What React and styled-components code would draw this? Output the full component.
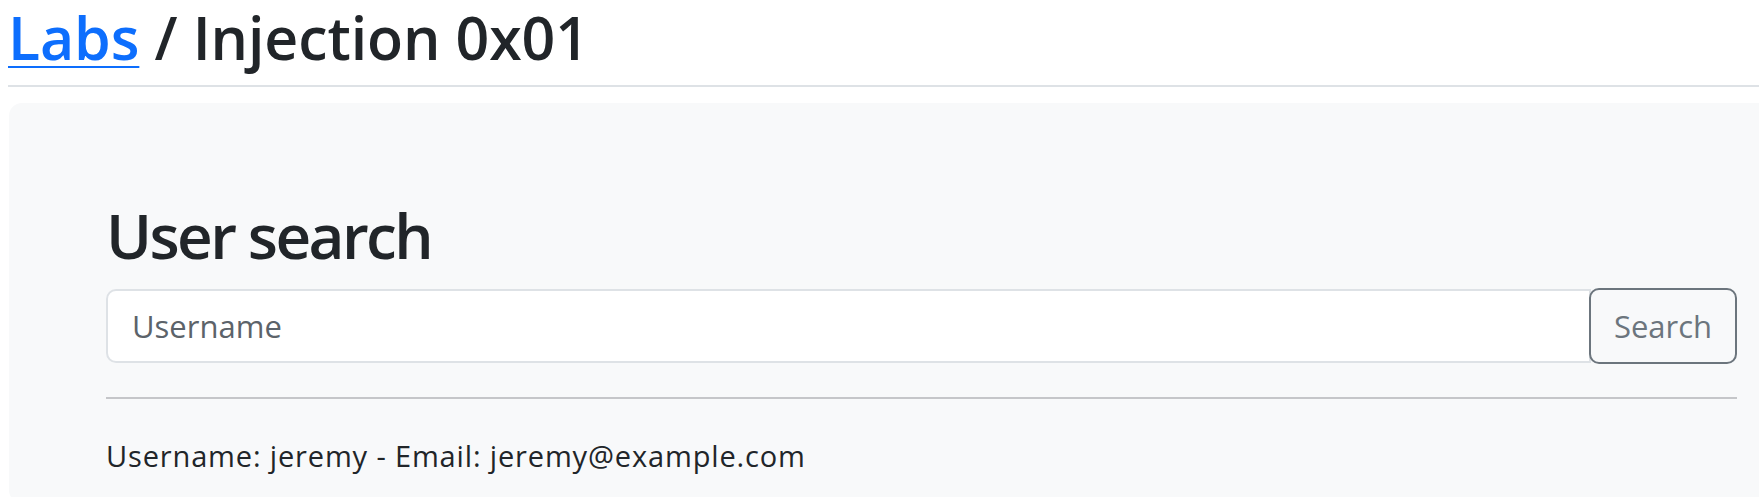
import React from "react";
import styled, { createGlobalStyle } from "styled-components";

const GlobalStyle = createGlobalStyle`
  html, body {
    margin: 0;
    padding: 0;
    overflow: hidden;
    background: #fff;
  }

  body {
    font-family: "Open Sans", "Noto Sans", sans-serif;
    color: #212529;
  }
`;

const Page = styled.div`
  padding: 0 0 0 8px;
`;

const Title = styled.h1`
  margin: 0;
  padding-top: 2px;
  font-size: 59px;
  font-weight: 600;
  line-height: 70px;
  letter-spacing: -0.1px;
  color: #212529;

  a {
    color: #0d6efd;
    text-decoration: underline;
    text-decoration-thickness: 2px;
    text-underline-offset: 6px;
  }
`;

const Rule = styled.hr`
  margin: 13px 0 0;
  border: 0;
  border-top: 2px solid ${(p) => p.color || "#dee2e6"};
`;

const Card = styled.section`
  margin: 16px 0 0 1px;
  width: 1824px;
  height: 400px;
  box-sizing: border-box;
  padding: 96px 97px 0;
  background: #f8f9fa;
  border-radius: 13px;
`;

const Heading = styled.h2`
  margin: 0;
  font-size: 62px;
  font-weight: 600;
  line-height: 72px;
  letter-spacing: -2.6px;
`;

const InputGroup = styled.form`
  display: flex;
  width: 1631px;
  margin-top: 17px;
`;

const Field = styled.input`
  flex: 1;
  height: 74px;
  box-sizing: border-box;
  margin-top: 1px;
  padding: 0 24px;
  font-family: inherit;
  font-size: 31px;
  color: #212529;
  background: #fff;
  border: 2px solid #dee2e6;
  border-radius: 10px 0 0 10px;
  outline: none;

  &::placeholder {
    color: #5c636a;
  }
`;

const Button = styled.button`
  width: 148px;
  height: 76px;
  margin-left: -2px;
  font-family: inherit;
  font-size: 31px;
  color: #6c757d;
  background: transparent;
  border: 2px solid #6c757d;
  border-radius: 10px;
`;

const Divider = styled(Rule)`
  width: 1631px;
  margin-top: 33px;
`;

const Result = styled.p`
  margin: 37px 0 0;
  font-size: 29px;
  line-height: 40px;
  letter-spacing: 0.85px;
`;

export default function App() {
  return (
    <Page>
      <GlobalStyle />
      <Title>
        <a href="#">Labs</a> / Injection 0x01
      </Title>
      <Rule />
      <Card>
        <Heading>User search</Heading>
        <InputGroup onSubmit={(e) => e.preventDefault()}>
          <Field placeholder="Username" />
          <Button type="submit">Search</Button>
        </InputGroup>
        <Divider color="#c5c6c9" />
        <Result>Username: jeremy - Email: jeremy@example.com</Result>
      </Card>
    </Page>
  );
}
